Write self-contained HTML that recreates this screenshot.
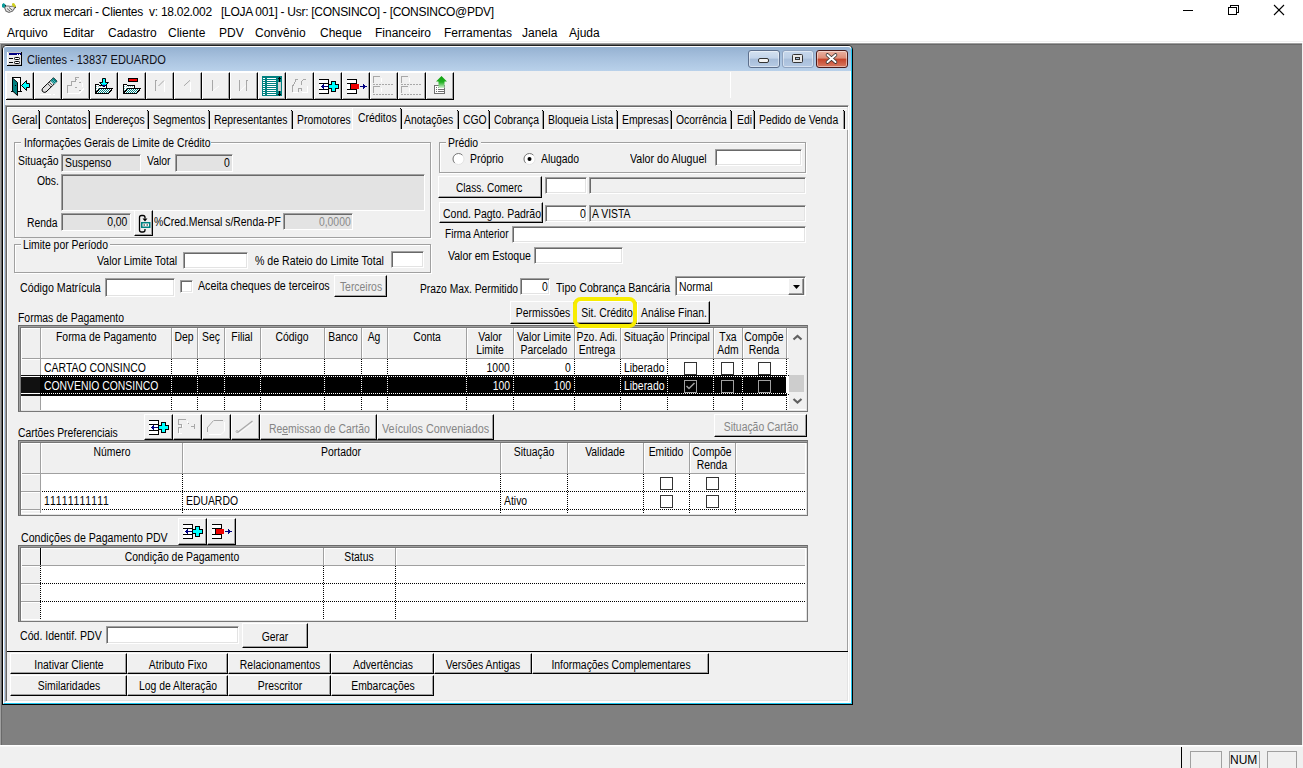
<!DOCTYPE html>
<html><head><meta charset="utf-8"><style>
html,body{margin:0;padding:0;}
body{width:1303px;height:768px;position:relative;overflow:hidden;background:#808080;font-family:"Liberation Sans",sans-serif;}
body>div,body>svg{position:absolute;}
.t{white-space:nowrap;}
</style></head><body>
<div style="left:0px;top:0px;width:1303px;height:41px;background:#fff"></div>
<div style="left:0px;top:41px;width:1303px;height:1px;background:#f0f0f0"></div>
<div style="left:0px;top:42px;width:1303px;height:1px;background:#fff"></div>
<div style="left:0px;top:43px;width:1303px;height:1px;background:#a0a0a0"></div>
<div style="left:0px;top:44px;width:1302px;height:1px;background:#696969"></div>
<div style="left:1302px;top:43px;width:1px;height:702px;background:#f0f0f0"></div>
<div style="left:0px;top:43px;width:1px;height:702px;background:#a0a0a0"></div>
<div style="left:1px;top:44px;width:1px;height:701px;background:#696969"></div>
<div style="left:0px;top:745px;width:1303px;height:1px;background:#fff"></div>
<div style="left:0px;top:746px;width:1303px;height:1px;background:#f8f8f8"></div>
<div style="left:0px;top:747px;width:1303px;height:21px;background:#f0f0f0"></div>
<div style="left:1181px;top:747px;width:1px;height:21px;background:#000"></div>
<div style="left:1190px;top:751px;width:32px;height:18px;border:1px solid #a0a0a0;box-sizing:border-box"></div>
<div style="left:1229px;top:751px;width:31px;height:18px;border:1px solid #a0a0a0;box-sizing:border-box"></div>
<div style="left:1267px;top:751px;width:30px;height:18px;border:1px solid #a0a0a0;box-sizing:border-box"></div>
<div class="t" style="left:1230.00px;top:754px;font-size:12px;line-height:12px;letter-spacing:0.000px;color:#000;">NUM</div>
<div class="t" style="left:23.00px;top:6px;font-size:12px;line-height:12px;letter-spacing:-0.280px;color:#000;white-space:pre;">acrux mercari - Clientes  v: 18.02.002   [LOJA 001] - Usr: [CONSINCO] - [CONSINCO@PDV]</div>
<div class="t" style="left:7.00px;top:27px;font-size:12px;line-height:12px;letter-spacing:0.000px;color:#000;">Arquivo</div>
<div class="t" style="left:63.00px;top:27px;font-size:12px;line-height:12px;letter-spacing:0.000px;color:#000;">Editar</div>
<div class="t" style="left:108.00px;top:27px;font-size:12px;line-height:12px;letter-spacing:0.000px;color:#000;">Cadastro</div>
<div class="t" style="left:168.00px;top:27px;font-size:12px;line-height:12px;letter-spacing:0.000px;color:#000;">Cliente</div>
<div class="t" style="left:219.00px;top:27px;font-size:12px;line-height:12px;letter-spacing:0.000px;color:#000;">PDV</div>
<div class="t" style="left:255.00px;top:27px;font-size:12px;line-height:12px;letter-spacing:0.000px;color:#000;">Convênio</div>
<div class="t" style="left:320.00px;top:27px;font-size:12px;line-height:12px;letter-spacing:0.000px;color:#000;">Cheque</div>
<div class="t" style="left:375.00px;top:27px;font-size:12px;line-height:12px;letter-spacing:0.000px;color:#000;">Financeiro</div>
<div class="t" style="left:444.00px;top:27px;font-size:12px;line-height:12px;letter-spacing:0.000px;color:#000;">Ferramentas</div>
<div class="t" style="left:522.00px;top:27px;font-size:12px;line-height:12px;letter-spacing:0.000px;color:#000;">Janela</div>
<div class="t" style="left:569.00px;top:27px;font-size:12px;line-height:12px;letter-spacing:0.000px;color:#000;">Ajuda</div>
<svg style="left:0;top:0" width="1303" height="44"><g stroke="#000" stroke-width="1" fill="none" shape-rendering="crispEdges"><line x1="1183" y1="10.5" x2="1193" y2="10.5"/><rect x="1228.5" y="7.5" width="8" height="7"/><path d="M1230.5 7.5V5.5H1238.5V12.5H1236.5"/></g><g stroke="#000" stroke-width="1.1" fill="none"><line x1="1274" y1="5" x2="1284" y2="15"/><line x1="1284" y1="5" x2="1274" y2="15"/></g><g><path d="M4.5 7.5L6 6H8.5L10.5 6.5L13 6L15 7.5L12.5 11L9 12.5L6 11Z" fill="#e8e8e8" stroke="#707070" stroke-width="1.1"/><path d="M7 8.5L10 11M9 7.5L12 10" stroke="#555" stroke-width="0.9"/><path d="M2 4.5L3.5 3L5.5 4.5V6L3.5 8L2 7Z" fill="#0a9a9a"/><path d="M5 5.5L6 6" stroke="#000"/><path d="M12 3.5L14 3L16 6L15.5 7.5L13 6.5L12 5Z" fill="#d0d020"/><path d="M15 7L16 7.5" stroke="#222"/></g></svg>
<div style="left:2px;top:45px;width:851px;height:660px;background:#f0f0f0;border:1px solid #1e1e1e;border-left-color:#000;border-right-color:#000;border-bottom-color:#000;box-sizing:border-box;border-radius:5px 5px 0 0"></div>
<div style="left:3px;top:46px;width:849px;height:658px;border-left:1px solid #fff;border-top:1px solid #fff;border-right:1px solid #1fc6ef;border-bottom:1px solid #1fc6ef;box-sizing:border-box;border-radius:4px 4px 0 0"></div>
<div style="left:4px;top:47px;width:847px;height:656px;border-left:1px solid #b8d0ec;border-right:1px solid #fff;border-bottom:1px solid #fff;box-sizing:border-box"></div>
<div style="left:4px;top:47px;width:847px;height:24px;background:linear-gradient(#95b1d1,#a7c1de 45%,#b9d1ea);border-radius:3px 3px 0 0"></div>
<div style="left:5px;top:71px;width:844px;height:630px;background:#f0f0f0"></div>
<div style="left:730px;top:72px;width:1px;height:26px;background:#fff"></div>
<div class="t" style="left:27.00px;top:54px;font-size:12px;line-height:12px;letter-spacing:0.000px;color:#101018;transform:scaleX(0.9205);transform-origin:left top;">Clientes - 13837 EDUARDO</div>
<svg style="left:7px;top:52px" width="16" height="14"><rect x="0" y="0" width="15" height="13" fill="#c8c8c8"/><rect x="1" y="1" width="13" height="11" fill="#ececec"/><rect x="14" y="0" width="1" height="14" fill="#000"/><rect x="0" y="13" width="15" height="1" fill="#000"/><rect x="0" y="0" width="1" height="13" fill="#fff"/><rect x="2" y="1" width="12" height="2" fill="#000080"/><rect x="10" y="2" width="1" height="1" fill="#fff"/><rect x="12" y="2" width="1" height="1" fill="#fff"/><rect x="2" y="6" width="4" height="1" fill="#000"/><rect x="7.5" y="5.5" width="5" height="2" rx="0.8" fill="#fff" stroke="#000"/><rect x="2" y="10" width="4" height="1" fill="#000"/><rect x="7.5" y="9.5" width="5" height="2" rx="0.8" fill="#fff" stroke="#000"/></svg>
<div style="left:748px;top:50px;width:32px;height:18px;border-radius:3px;border:1px solid #5d6f8c;box-sizing:border-box;background:linear-gradient(#d4e1f0 0,#c3d4ea 45%,#a6bcd8 50%,#b7cbe4 100%);box-shadow:inset 0 0 0 1px rgba(255,255,255,0.45)"></div>
<div style="left:782px;top:50px;width:32px;height:18px;border-radius:3px;border:1px solid #8fa3bf;box-sizing:border-box;background:linear-gradient(#c6d7ec 0,#bccfe6 45%,#a9bfdb 50%,#b4c9e3 100%);box-shadow:inset 0 0 0 1px rgba(255,255,255,0.45)"></div>
<div style="left:816px;top:50px;width:32px;height:18px;border-radius:3px;border:1px solid #4a1a1a;box-sizing:border-box;background:linear-gradient(#eab1a1 0,#de8d78 45%,#c5432a 50%,#d77a62 100%);box-shadow:inset 0 0 0 1px rgba(255,255,255,0.45)"></div>
<svg style="left:748px;top:50px" width="100" height="18"><rect x="10.5" y="8.5" width="10" height="4" rx="1.5" fill="#f4f4f4" stroke="#333"/><rect x="44.5" y="4.5" width="10" height="8" rx="1" fill="#e8e8e8" stroke="#333"/><rect x="47.5" y="7.5" width="4" height="2" fill="#a6bcd8" stroke="#333"/><path d="M79.5 5L87.5 12M87.5 5L79.5 12" stroke="#333" stroke-width="3.6" stroke-linecap="round"/><path d="M79.5 5L87.5 12M87.5 5L79.5 12" stroke="#fff" stroke-width="2" stroke-linecap="round"/></svg>
<div style="left:6px;top:72px;width:28px;height:27px;border-top:1px solid #fff;border-left:1px solid #fff;border-right:1px solid #000;box-sizing:border-box;box-shadow:inset -1px -1px 0 #a0a0a0"></div>
<div style="left:34px;top:72px;width:28px;height:27px;border-top:1px solid #fff;border-left:1px solid #fff;border-right:1px solid #000;box-sizing:border-box;box-shadow:inset -1px -1px 0 #a0a0a0"></div>
<div style="left:62px;top:72px;width:28px;height:27px;border-top:1px solid #fff;border-left:1px solid #fff;border-right:1px solid #000;box-sizing:border-box;box-shadow:inset -1px -1px 0 #a0a0a0"></div>
<div style="left:90px;top:72px;width:28px;height:27px;border-top:1px solid #fff;border-left:1px solid #fff;border-right:1px solid #000;box-sizing:border-box;box-shadow:inset -1px -1px 0 #a0a0a0"></div>
<div style="left:118px;top:72px;width:28px;height:27px;border-top:1px solid #fff;border-left:1px solid #fff;border-right:1px solid #000;box-sizing:border-box;box-shadow:inset -1px -1px 0 #a0a0a0"></div>
<div style="left:146px;top:72px;width:28px;height:27px;border-top:1px solid #fff;border-left:1px solid #fff;border-right:1px solid #000;box-sizing:border-box;box-shadow:inset -1px -1px 0 #a0a0a0"></div>
<div style="left:174px;top:72px;width:28px;height:27px;border-top:1px solid #fff;border-left:1px solid #fff;border-right:1px solid #000;box-sizing:border-box;box-shadow:inset -1px -1px 0 #a0a0a0"></div>
<div style="left:202px;top:72px;width:28px;height:27px;border-top:1px solid #fff;border-left:1px solid #fff;border-right:1px solid #000;box-sizing:border-box;box-shadow:inset -1px -1px 0 #a0a0a0"></div>
<div style="left:230px;top:72px;width:28px;height:27px;border-top:1px solid #fff;border-left:1px solid #fff;border-right:1px solid #000;box-sizing:border-box;box-shadow:inset -1px -1px 0 #a0a0a0"></div>
<div style="left:258px;top:72px;width:28px;height:27px;border-top:1px solid #fff;border-left:1px solid #fff;border-right:1px solid #000;box-sizing:border-box;box-shadow:inset -1px -1px 0 #a0a0a0"></div>
<div style="left:286px;top:72px;width:28px;height:27px;border-top:1px solid #fff;border-left:1px solid #fff;border-right:1px solid #000;box-sizing:border-box;box-shadow:inset -1px -1px 0 #a0a0a0"></div>
<div style="left:314px;top:72px;width:28px;height:27px;border-top:1px solid #fff;border-left:1px solid #fff;border-right:1px solid #000;box-sizing:border-box;box-shadow:inset -1px -1px 0 #a0a0a0"></div>
<div style="left:342px;top:72px;width:28px;height:27px;border-top:1px solid #fff;border-left:1px solid #fff;border-right:1px solid #000;box-sizing:border-box;box-shadow:inset -1px -1px 0 #a0a0a0"></div>
<div style="left:370px;top:72px;width:28px;height:27px;border-top:1px solid #fff;border-left:1px solid #fff;border-right:1px solid #000;box-sizing:border-box;box-shadow:inset -1px -1px 0 #a0a0a0"></div>
<div style="left:398px;top:72px;width:28px;height:27px;border-top:1px solid #fff;border-left:1px solid #fff;border-right:1px solid #000;box-sizing:border-box;box-shadow:inset -1px -1px 0 #a0a0a0"></div>
<div style="left:426px;top:72px;width:28px;height:27px;border-top:1px solid #fff;border-left:1px solid #fff;border-right:1px solid #000;box-sizing:border-box;box-shadow:inset -1px -1px 0 #a0a0a0"></div>
<div style="left:5px;top:99px;width:449px;height:1px;background:#000"></div>
<div style="left:5px;top:71px;width:1px;height:29px;background:#fff"></div>
<div style="left:5px;top:71px;width:449px;height:1px;background:#fff"></div>
<svg style="left:6px;top:72px" width="27" height="27"><g shape-rendering="crispEdges"><rect x="6.5" y="5.5" width="8" height="14" fill="#fff" stroke="#000"/><path d="M5 19.5H16" stroke="#000"/></g><path d="M6.5 6L11.5 10.5V23.5L6.5 19Z" fill="#008080" stroke="#000"/><rect x="9" y="13" width="1" height="1" fill="#000"/><path d="M15.5 13.5L20.5 8.5V11.5H23.5V15.5H20.5V18.5Z" fill="#00ffff" stroke="#000"/></svg>
<svg style="left:34px;top:72px" width="27" height="27"><path d="M8.5 16.5L19.5 5.8L23 9.3L12 20 Q10 21 8.5 19.5 Q7.5 18 8.5 16.5Z" fill="#e0e0e0" stroke="#000"/><path d="M16.5 8.7L19.5 5.8L23 9.3L20 12.2Z" fill="#008080"/><path d="M17.5 8.5L21 12M18.5 7.5L22 11" stroke="#7fd0d0" stroke-width="0.7"/><path d="M13.5 11.5L17 15M15 10L18.5 13.5" stroke="#555" stroke-width="1"/><path d="M6 22.5H17M19 22.5H21" stroke="#fff"/></svg>
<svg style="left:62px;top:72px" width="27" height="27"><g shape-rendering="crispEdges"><path d="M5.5 21V13.5H7.5M9.5 12V9.5H11.5M13.5 8V5.5H17" stroke="#a8a8a8" fill="none"/><path d="M7.5 13.5H9.5V12M11.5 9.5H13.5V8" stroke="#a8a8a8" fill="none"/><path d="M14 7.5H15M17 10.5H19M13 15.5H15M17 18.5H21" stroke="#a8a8a8"/><path d="M6 21.5H17L22 16.5M20 11V15M18.5 8V9" stroke="#fff" fill="none"/></g></svg>
<svg style="left:90px;top:72px" width="27" height="27"><defs><pattern id="dith3" width="2" height="2" patternUnits="userSpaceOnUse"><rect width="2" height="2" fill="#fff"/><rect width="1" height="1" fill="#008080"/><rect x="1" y="1" width="1" height="1" fill="#008080"/></pattern><pattern id="dithl3" width="2" height="2" patternUnits="userSpaceOnUse"><rect width="2" height="2" fill="#fff"/><rect width="1" height="1" fill="#80c0c0"/></pattern></defs><g shape-rendering="crispEdges"><path d="M5.5 21.5V12.5H8.5L9.5 13.5H16.5V16.5" fill="url(#dithl3)" stroke="#000"/><path d="M5.5 21.5H18.5L22.5 16.5H9.5Z" fill="url(#dith3)" stroke="#000"/></g><path d="M12.5 6.5H15.5V10.5H18.5L14 15L9.5 10.5H12.5Z" fill="#00ffff" stroke="#000"/><path d="M13 13.5H15" stroke="#0000c0" stroke-width="1.5"/></svg>
<svg style="left:118px;top:72px" width="27" height="27"><defs><pattern id="dith4" width="2" height="2" patternUnits="userSpaceOnUse"><rect width="2" height="2" fill="#fff"/><rect width="1" height="1" fill="#008080"/><rect x="1" y="1" width="1" height="1" fill="#008080"/></pattern><pattern id="dithl4" width="2" height="2" patternUnits="userSpaceOnUse"><rect width="2" height="2" fill="#fff"/><rect width="1" height="1" fill="#80c0c0"/></pattern></defs><g shape-rendering="crispEdges"><path d="M5.5 21.5V12.5H8.5L9.5 13.5H16.5V16.5" fill="url(#dithl4)" stroke="#000"/><path d="M5.5 21.5H18.5L22.5 16.5H9.5Z" fill="url(#dith4)" stroke="#000"/></g><rect x="10.5" y="6.5" width="9" height="3" fill="#f00000" stroke="#000"/></svg>
<svg style="left:146px;top:72px" width="27" height="27"><g shape-rendering="crispEdges"><path d="M9.5 8V19M10 8.5H11" stroke="#a8a8a8"/><path d="M18.5 8V20" stroke="#fff"/></g><path d="M12.5 14L18 8.5" stroke="#a8a8a8"/></svg>
<svg style="left:174px;top:72px" width="27" height="27"><path d="M10 13.8L16 8.3" stroke="#a8a8a8"/><path d="M16.5 10V20" stroke="#fff" shape-rendering="crispEdges"/></svg>
<svg style="left:202px;top:72px" width="27" height="27"><path d="M10.5 8V19" stroke="#a8a8a8" shape-rendering="crispEdges"/><path d="M11 19L17 14" stroke="#fff"/></svg>
<svg style="left:230px;top:72px" width="27" height="27"><g shape-rendering="crispEdges"><path d="M9.5 8V19M16.5 9V19M16 8.5H18" stroke="#a8a8a8"/></g><path d="M10 19L16 13.5" stroke="#fff"/></svg>
<svg style="left:258px;top:72px" width="27" height="27"><g shape-rendering="crispEdges"><rect x="4" y="4" width="20" height="20" fill="#008080"/><path d="M5 6.5H7M9 6.5H18" stroke="#fff"/><path d="M5 8.5H7M9 8.5H18" stroke="#fff"/><path d="M5 10.5H7M9 10.5H18" stroke="#fff"/><path d="M5 12.5H7M9 12.5H18" stroke="#fff"/><path d="M5 14.5H7M9 14.5H18" stroke="#fff"/><path d="M5 16.5H7M9 16.5H18" stroke="#fff"/><path d="M5 18.5H7M9 18.5H18" stroke="#fff"/><path d="M5 20.5H7M9 20.5H18" stroke="#fff"/><path d="M5 22.5H7M9 22.5H18" stroke="#fff"/><rect x="20" y="10" width="3" height="9" fill="#d0d0d0"/><path d="M21.5 5V10M21.5 19V24M20 6.5H23M20 22.5H23" stroke="#000"/></g></svg>
<svg style="left:286px;top:72px" width="27" height="27"><g shape-rendering="crispEdges"><path d="M6.5 20V14.5L9.5 9V7.5H12M15.5 13V9.5L17.5 7.5H20M12.5 20V16.5H15.5V19" stroke="#a8a8a8" fill="none"/><path d="M7 20.5H12M16 20.5H21.5V14" stroke="#fff" fill="none"/></g></svg>
<svg style="left:317px;top:77px" width="24" height="19"><g transform="translate(2,2)" shape-rendering="crispEdges"><rect x="0" y="0" width="9" height="15" fill="#fff"/><path d="M0 0.5H10M0 4.5H10M0 10.5H10M0 14.5H10M9.5 0V15" stroke="#000"/><path d="M3 7.5H9M4.5 5V10M3.5 6V9" stroke="#000080"/><path d="M2 7.5H3" stroke="#000080"/><path d="M12.5 2.5H16.5V5.5H19.5V9.5H16.5V12.5H12.5V9.5H9.5V5.5H12.5Z" fill="#00ffff" stroke="#000"/></g></svg>
<svg style="left:345px;top:77px" width="24" height="19"><g transform="translate(2,2)" shape-rendering="crispEdges"><rect x="0" y="0" width="9" height="15" fill="#fff"/><path d="M0 0.5H10M0 4.5H10M0 10.5H10M0 14.5H10M9.5 0V5M9.5 10V15M3.5 4V11" stroke="#000"/><rect x="4" y="5" width="8" height="5" fill="#f00000"/><path d="M13 7.5H19M16.5 5V10M17.5 6V9" stroke="#000080"/><path d="M18 7.5H20" stroke="#000080"/></g></svg>
<svg style="left:370px;top:72px" width="27" height="27"><g shape-rendering="crispEdges"><path d="M3.5 11V4.5H10M3.5 21V14.5H10" stroke="#a8a8a8" fill="none"/><path d="M11.5 6V10M11.5 16V20" stroke="#fff"/><path d="M3 12.5H24M3 22.5H24" stroke="#a8a8a8" stroke-dasharray="2 1"/></g></svg>
<svg style="left:398px;top:72px" width="27" height="27"><g shape-rendering="crispEdges"><path d="M3.5 11V4.5H10M3.5 21V14.5H10" stroke="#a8a8a8" fill="none"/><path d="M11.5 6V10M11.5 16V20" stroke="#fff"/><path d="M3 12.5H24M3 22.5H24" stroke="#a8a8a8" stroke-dasharray="2 1"/></g></svg>
<svg style="left:426px;top:72px" width="27" height="27"><defs><linearGradient id="ga" x1="0" y1="0" x2="0" y2="1"><stop offset="0" stop-color="#10a010"/><stop offset="0.5" stop-color="#20b020"/><stop offset="1" stop-color="#d0f0d0"/></linearGradient></defs><g shape-rendering="crispEdges"><rect x="8.5" y="13.5" width="10" height="8" fill="#fff" stroke="#707070"/><path d="M10 15.5H11M10 17.5H11M10 19.5H11M12 15.5H18M12 17.5H18M12 19.5H18" stroke="#707070"/></g><path d="M12.5 16V9.5H10L15.5 4L21 9.5H18.5V16Z" fill="url(#ga)"/></svg>
<div style="left:5px;top:105px;width:844px;height:597px;border-top:1px solid #a0a0a0;border-left:1px solid #a0a0a0;border-right:1px solid #fff;border-bottom:1px solid #fff;box-sizing:border-box;box-shadow:inset 1px 1px 0 #696969, inset -1px -1px 0 #e3e3e3"></div>
<div style="left:7px;top:107px;width:840px;height:1px;background:#fff"></div>
<div style="left:7px;top:107px;width:1px;height:544px;background:#fff"></div>
<div style="left:9px;top:109px;width:838px;height:1px;background:#fbfbfb"></div>
<div style="left:9px;top:129px;width:838px;height:1px;background:#fff"></div>
<div style="left:847px;top:130px;width:1px;height:521px;background:#a0a0a0"></div>
<div style="left:7px;top:651px;width:841px;height:1px;background:#000"></div>
<div style="left:352px;top:107px;width:49px;height:23px;background:#f0f0f0;border-top:1px solid #fff;border-left:1px solid #fff;box-sizing:border-box"></div>
<div style="left:38px;top:111px;width:1px;height:18px;background:#a0a0a0"></div>
<div style="left:39px;top:111px;width:1px;height:18px;background:#000"></div>
<div style="left:38px;top:110px;width:1px;height:1px;background:#000"></div>
<div style="left:88px;top:111px;width:1px;height:18px;background:#a0a0a0"></div>
<div style="left:89px;top:111px;width:1px;height:18px;background:#000"></div>
<div style="left:88px;top:110px;width:1px;height:1px;background:#000"></div>
<div style="left:147px;top:111px;width:1px;height:18px;background:#a0a0a0"></div>
<div style="left:148px;top:111px;width:1px;height:18px;background:#000"></div>
<div style="left:147px;top:110px;width:1px;height:1px;background:#000"></div>
<div style="left:208px;top:111px;width:1px;height:18px;background:#a0a0a0"></div>
<div style="left:209px;top:111px;width:1px;height:18px;background:#000"></div>
<div style="left:208px;top:110px;width:1px;height:1px;background:#000"></div>
<div style="left:291px;top:111px;width:1px;height:18px;background:#a0a0a0"></div>
<div style="left:292px;top:111px;width:1px;height:18px;background:#000"></div>
<div style="left:291px;top:110px;width:1px;height:1px;background:#000"></div>
<div style="left:400px;top:109px;width:1px;height:20px;background:#a0a0a0"></div>
<div style="left:401px;top:109px;width:1px;height:20px;background:#000"></div>
<div style="left:400px;top:108px;width:1px;height:1px;background:#000"></div>
<div style="left:457px;top:111px;width:1px;height:18px;background:#a0a0a0"></div>
<div style="left:458px;top:111px;width:1px;height:18px;background:#000"></div>
<div style="left:457px;top:110px;width:1px;height:1px;background:#000"></div>
<div style="left:488px;top:111px;width:1px;height:18px;background:#a0a0a0"></div>
<div style="left:489px;top:111px;width:1px;height:18px;background:#000"></div>
<div style="left:488px;top:110px;width:1px;height:1px;background:#000"></div>
<div style="left:542px;top:111px;width:1px;height:18px;background:#a0a0a0"></div>
<div style="left:543px;top:111px;width:1px;height:18px;background:#000"></div>
<div style="left:542px;top:110px;width:1px;height:1px;background:#000"></div>
<div style="left:616px;top:111px;width:1px;height:18px;background:#a0a0a0"></div>
<div style="left:617px;top:111px;width:1px;height:18px;background:#000"></div>
<div style="left:616px;top:110px;width:1px;height:1px;background:#000"></div>
<div style="left:670px;top:111px;width:1px;height:18px;background:#a0a0a0"></div>
<div style="left:671px;top:111px;width:1px;height:18px;background:#000"></div>
<div style="left:670px;top:110px;width:1px;height:1px;background:#000"></div>
<div style="left:730px;top:111px;width:1px;height:18px;background:#a0a0a0"></div>
<div style="left:731px;top:111px;width:1px;height:18px;background:#000"></div>
<div style="left:730px;top:110px;width:1px;height:1px;background:#000"></div>
<div style="left:753px;top:111px;width:1px;height:18px;background:#a0a0a0"></div>
<div style="left:754px;top:111px;width:1px;height:18px;background:#000"></div>
<div style="left:753px;top:110px;width:1px;height:1px;background:#000"></div>
<div style="left:843px;top:111px;width:1px;height:18px;background:#a0a0a0"></div>
<div style="left:844px;top:111px;width:1px;height:18px;background:#000"></div>
<div style="left:843px;top:110px;width:1px;height:1px;background:#000"></div>
<div class="t" style="left:11.50px;top:114px;font-size:12px;line-height:12px;letter-spacing:0.000px;color:#000;transform:scaleX(0.8660);transform-origin:left top;">Geral</div>
<div class="t" style="left:44.50px;top:114px;font-size:12px;line-height:12px;letter-spacing:0.000px;color:#000;transform:scaleX(0.8660);transform-origin:left top;">Contatos</div>
<div class="t" style="left:94.50px;top:114px;font-size:12px;line-height:12px;letter-spacing:0.000px;color:#000;transform:scaleX(0.8660);transform-origin:left top;">Endereços</div>
<div class="t" style="left:153.00px;top:114px;font-size:12px;line-height:12px;letter-spacing:0.000px;color:#000;transform:scaleX(0.8660);transform-origin:left top;">Segmentos</div>
<div class="t" style="left:214.00px;top:114px;font-size:12px;line-height:12px;letter-spacing:0.000px;color:#000;transform:scaleX(0.8660);transform-origin:left top;">Representantes</div>
<div class="t" style="left:297.00px;top:114px;font-size:12px;line-height:12px;letter-spacing:0.000px;color:#000;transform:scaleX(0.8660);transform-origin:left top;">Promotores</div>
<div class="t" style="left:403.50px;top:114px;font-size:12px;line-height:12px;letter-spacing:0.000px;color:#000;transform:scaleX(0.8660);transform-origin:left top;">Anotações</div>
<div class="t" style="left:463.00px;top:114px;font-size:12px;line-height:12px;letter-spacing:0.000px;color:#000;transform:scaleX(0.8660);transform-origin:left top;">CGO</div>
<div class="t" style="left:494.00px;top:114px;font-size:12px;line-height:12px;letter-spacing:0.000px;color:#000;transform:scaleX(0.8660);transform-origin:left top;">Cobrança</div>
<div class="t" style="left:548.00px;top:114px;font-size:12px;line-height:12px;letter-spacing:0.000px;color:#000;transform:scaleX(0.8660);transform-origin:left top;">Bloqueia Lista</div>
<div class="t" style="left:622.00px;top:114px;font-size:12px;line-height:12px;letter-spacing:0.000px;color:#000;transform:scaleX(0.8660);transform-origin:left top;">Empresas</div>
<div class="t" style="left:676.00px;top:114px;font-size:12px;line-height:12px;letter-spacing:0.000px;color:#000;transform:scaleX(0.8660);transform-origin:left top;">Ocorrência</div>
<div class="t" style="left:736.50px;top:114px;font-size:12px;line-height:12px;letter-spacing:0.000px;color:#000;transform:scaleX(0.8660);transform-origin:left top;">Edi</div>
<div class="t" style="left:759.00px;top:114px;font-size:12px;line-height:12px;letter-spacing:0.000px;color:#000;transform:scaleX(0.8660);transform-origin:left top;">Pedido de Venda</div>
<div class="t" style="left:358.00px;top:112px;font-size:12px;line-height:12px;letter-spacing:0.000px;color:#000;transform:scaleX(0.8660);transform-origin:left top;">Créditos</div>
<div style="left:14px;top:142px;width:417px;height:96px;border:1px solid #a0a0a0;box-sizing:border-box;box-shadow:inset 1px 1px 0 #fff, 1px 1px 0 #fff"></div>
<div style="left:21px;top:136px;width:190px;height:12px;background:#f0f0f0"></div>
<div class="t" style="left:23.50px;top:137px;font-size:12px;line-height:12px;letter-spacing:0.000px;color:#000;transform:scaleX(0.8657);transform-origin:left top;">Informações Gerais de Limite de Crédito</div>
<div class="t" style="left:17.50px;top:155px;font-size:12px;line-height:12px;letter-spacing:0.000px;color:#000;transform:scaleX(0.8660);transform-origin:left top;">Situação</div>
<div style="left:61px;top:154px;width:80px;height:18px;background:#e3e3e3;border-top:1px solid #a0a0a0;border-left:1px solid #a0a0a0;border-bottom:1px solid #fff;border-right:1px solid #fff;box-sizing:border-box;box-shadow:inset 1px 1px 0 #696969, inset -1px -1px 0 #e3e3e3"></div>
<div class="t" style="left:65.00px;top:157px;font-size:12px;line-height:12px;letter-spacing:0.000px;color:#000;transform:scaleX(0.8660);transform-origin:left top;">Suspenso</div>
<div class="t" style="left:147.00px;top:155px;font-size:12px;line-height:12px;letter-spacing:0.000px;color:#000;transform:scaleX(0.8660);transform-origin:left top;">Valor</div>
<div style="left:175px;top:154px;width:58px;height:18px;background:#e3e3e3;border-top:1px solid #a0a0a0;border-left:1px solid #a0a0a0;border-bottom:1px solid #fff;border-right:1px solid #fff;box-sizing:border-box;box-shadow:inset 1px 1px 0 #696969, inset -1px -1px 0 #e3e3e3"></div>
<div class="t" style="right:1073.00px;top:157px;font-size:12px;line-height:12px;letter-spacing:0.000px;color:#000;text-align:right;transform:scaleX(0.8660);transform-origin:right top;">0</div>
<div class="t" style="left:37.00px;top:175px;font-size:12px;line-height:12px;letter-spacing:0.000px;color:#000;transform:scaleX(0.8660);transform-origin:left top;">Obs.</div>
<div style="left:61px;top:174px;width:364px;height:37px;background:#e3e3e3;border-top:1px solid #a0a0a0;border-left:1px solid #a0a0a0;border-bottom:1px solid #fff;border-right:1px solid #fff;box-sizing:border-box;box-shadow:inset 1px 1px 0 #696969, inset -1px -1px 0 #e3e3e3"></div>
<div class="t" style="left:27.00px;top:217px;font-size:12px;line-height:12px;letter-spacing:0.000px;color:#000;transform:scaleX(0.8660);transform-origin:left top;">Renda</div>
<div style="left:61px;top:213px;width:70px;height:18px;background:#e3e3e3;border-top:1px solid #a0a0a0;border-left:1px solid #a0a0a0;border-bottom:1px solid #fff;border-right:1px solid #fff;box-sizing:border-box;box-shadow:inset 1px 1px 0 #696969, inset -1px -1px 0 #e3e3e3"></div>
<div class="t" style="right:1176.00px;top:216px;font-size:12px;line-height:12px;letter-spacing:0.000px;color:#000;text-align:right;transform:scaleX(0.8660);transform-origin:right top;">0,00</div>
<div style="left:134px;top:210px;width:19px;height:26px;background:#f0f0f0;border-top:1px solid #fff;border-left:1px solid #fff;border-bottom:1px solid #000;border-right:1px solid #000;box-sizing:border-box;box-shadow:inset -1px -1px 0 #a0a0a0"></div>
<svg style="left:134px;top:210px" width="19" height="26"><path d="M11 8.5V7.5Q11 5.5 9 5.5H7.5Q5.5 5.5 5.5 7.5V20Q5.5 22 7.5 22H9Q11 22 11 20V19" stroke="#000" stroke-width="1.3" fill="none"/><path d="M8.5 8.5H13.5L11 11.5Z" fill="#000"/><rect x="7.75" y="12.75" width="8" height="4.5" fill="#fff" stroke="#008080" stroke-width="1.5"/><path d="M9.5 15H11M12.5 15H14" stroke="#000"/></svg>
<div class="t" style="left:153.50px;top:216px;font-size:12px;line-height:12px;letter-spacing:0.000px;color:#000;transform:scaleX(0.8678);transform-origin:left top;">%Cred.Mensal s/Renda-PF</div>
<div style="left:283px;top:213px;width:70px;height:17px;background:#e3e3e3;border-top:1px solid #a0a0a0;border-left:1px solid #a0a0a0;border-bottom:1px solid #fff;border-right:1px solid #fff;box-sizing:border-box;box-shadow:inset 1px 1px 0 #696969, inset -1px -1px 0 #e3e3e3"></div>
<div class="t" style="right:952.00px;top:216px;font-size:12px;line-height:12px;letter-spacing:0.000px;color:#8a8a8a;text-align:right;transform:scaleX(0.8660);transform-origin:right top;">0,0000</div>
<div style="left:14px;top:244px;width:417px;height:29px;border:1px solid #a0a0a0;box-sizing:border-box;box-shadow:inset 1px 1px 0 #fff, 1px 1px 0 #fff"></div>
<div style="left:21px;top:238px;width:89px;height:12px;background:#f0f0f0"></div>
<div class="t" style="left:23.00px;top:239px;font-size:12px;line-height:12px;letter-spacing:0.000px;color:#000;transform:scaleX(0.8660);transform-origin:left top;">Limite por Período</div>
<div class="t" style="left:96.50px;top:255px;font-size:12px;line-height:12px;letter-spacing:0.000px;color:#000;transform:scaleX(0.8813);transform-origin:left top;">Valor Limite Total</div>
<div style="left:183px;top:252px;width:65px;height:17px;background:#fff;border-top:1px solid #a0a0a0;border-left:1px solid #a0a0a0;border-bottom:1px solid #fff;border-right:1px solid #fff;box-sizing:border-box;box-shadow:inset 1px 1px 0 #696969, inset -1px -1px 0 #e3e3e3"></div>
<div class="t" style="left:255.30px;top:255px;font-size:12px;line-height:12px;letter-spacing:0.000px;color:#000;transform:scaleX(0.8836);transform-origin:left top;">% de Rateio do Limite Total</div>
<div style="left:391px;top:251px;width:33px;height:17px;background:#fff;border-top:1px solid #a0a0a0;border-left:1px solid #a0a0a0;border-bottom:1px solid #fff;border-right:1px solid #fff;box-sizing:border-box;box-shadow:inset 1px 1px 0 #696969, inset -1px -1px 0 #e3e3e3"></div>
<div class="t" style="left:20.30px;top:282px;font-size:12px;line-height:12px;letter-spacing:0.000px;color:#000;transform:scaleX(0.8901);transform-origin:left top;">Código Matrícula</div>
<div style="left:105px;top:278px;width:70px;height:19px;background:#fff;border-top:1px solid #a0a0a0;border-left:1px solid #a0a0a0;border-bottom:1px solid #fff;border-right:1px solid #fff;box-sizing:border-box;box-shadow:inset 1px 1px 0 #696969, inset -1px -1px 0 #e3e3e3"></div>
<div style="left:180px;top:280px;width:13px;height:13px;background:#fff;border-top:1px solid #a0a0a0;border-left:1px solid #a0a0a0;border-bottom:1px solid #fff;border-right:1px solid #fff;box-sizing:border-box;box-shadow:inset 1px 1px 0 #696969, inset -1px -1px 0 #e3e3e3"></div>
<div class="t" style="left:198.20px;top:280px;font-size:12px;line-height:12px;letter-spacing:0.000px;color:#000;transform:scaleX(0.8892);transform-origin:left top;">Aceita cheques de terceiros</div>
<div style="left:334px;top:275px;width:53px;height:22px;background:#f0f0f0;border-top:1px solid #fff;border-left:1px solid #fff;border-bottom:1px solid #000;border-right:1px solid #000;box-sizing:border-box;box-shadow:inset -1px -1px 0 #a0a0a0"></div>
<div class="t" style="left:160.50px;width:400px;text-align:center;top:281px;font-size:12px;line-height:12px;letter-spacing:0.000px;color:#858585;transform:scaleX(0.8660);transform-origin:center top;">Terceiros</div>
<div style="left:439px;top:142px;width:367px;height:31px;border:1px solid #a0a0a0;box-sizing:border-box;box-shadow:inset 1px 1px 0 #fff, 1px 1px 0 #fff"></div>
<div style="left:446px;top:136px;width:35px;height:12px;background:#f0f0f0"></div>
<div class="t" style="left:448.00px;top:137px;font-size:12px;line-height:12px;letter-spacing:0.000px;color:#000;transform:scaleX(0.8660);transform-origin:left top;">Prédio</div>
<svg style="left:451px;top:152px" width="90" height="14"><circle cx="7.5" cy="7" r="5.5" fill="#fff" stroke="#e3e3e3"/><path d="M3.6 10.9A5.5 5.5 0 0 1 11.4 3.1" stroke="#7a7a7a" fill="none"/><circle cx="78.5" cy="7" r="5.5" fill="#fff" stroke="#e3e3e3"/><path d="M74.6 10.9A5.5 5.5 0 0 1 82.4 3.1" stroke="#7a7a7a" fill="none"/><circle cx="78.5" cy="7" r="2" fill="#000"/></svg>
<div class="t" style="left:470.00px;top:153px;font-size:12px;line-height:12px;letter-spacing:0.000px;color:#000;transform:scaleX(0.8660);transform-origin:left top;">Próprio</div>
<div class="t" style="left:541.00px;top:153px;font-size:12px;line-height:12px;letter-spacing:0.000px;color:#000;transform:scaleX(0.8660);transform-origin:left top;">Alugado</div>
<div class="t" style="left:630.20px;top:153px;font-size:12px;line-height:12px;letter-spacing:0.000px;color:#000;transform:scaleX(0.8862);transform-origin:left top;">Valor do Aluguel</div>
<div style="left:715px;top:149px;width:87px;height:17px;background:#fff;border-top:1px solid #a0a0a0;border-left:1px solid #a0a0a0;border-bottom:1px solid #fff;border-right:1px solid #fff;box-sizing:border-box;box-shadow:inset 1px 1px 0 #696969, inset -1px -1px 0 #e3e3e3"></div>
<div style="left:438px;top:176px;width:104px;height:22px;background:#f0f0f0;border-top:1px solid #fff;border-left:1px solid #fff;border-bottom:1px solid #000;border-right:1px solid #000;box-sizing:border-box;box-shadow:inset -1px -1px 0 #a0a0a0"></div>
<div class="t" style="left:456.40px;top:182px;font-size:12px;line-height:12px;letter-spacing:0.000px;color:#000;transform:scaleX(0.8430);transform-origin:left top;">Class. Comerc</div>
<div style="left:545px;top:177px;width:42px;height:17px;background:#fff;border-top:1px solid #a0a0a0;border-left:1px solid #a0a0a0;border-bottom:1px solid #fff;border-right:1px solid #fff;box-sizing:border-box;box-shadow:inset 1px 1px 0 #696969, inset -1px -1px 0 #e3e3e3"></div>
<div style="left:589px;top:177px;width:217px;height:17px;background:#f0f0f0;border-top:1px solid #a0a0a0;border-left:1px solid #a0a0a0;border-bottom:1px solid #fff;border-right:1px solid #fff;box-sizing:border-box;box-shadow:inset 1px 1px 0 #696969, inset -1px -1px 0 #e3e3e3"></div>
<div style="left:439px;top:202px;width:104px;height:21px;background:#f0f0f0;border-top:1px solid #fff;border-left:1px solid #fff;border-bottom:1px solid #000;border-right:1px solid #000;box-sizing:border-box;box-shadow:inset -1px -1px 0 #a0a0a0"></div>
<div class="t" style="left:442.90px;top:208px;font-size:12px;line-height:12px;letter-spacing:0.000px;color:#000;transform:scaleX(0.8741);transform-origin:left top;">Cond. Pagto. Padrão</div>
<div style="left:545px;top:205px;width:42px;height:17px;background:#fff;border-top:1px solid #a0a0a0;border-left:1px solid #a0a0a0;border-bottom:1px solid #fff;border-right:1px solid #fff;box-sizing:border-box;box-shadow:inset 1px 1px 0 #696969, inset -1px -1px 0 #e3e3e3"></div>
<div class="t" style="right:717.00px;top:208px;font-size:12px;line-height:12px;letter-spacing:0.000px;color:#000;text-align:right;transform:scaleX(0.8660);transform-origin:right top;">0</div>
<div style="left:589px;top:205px;width:217px;height:17px;background:#f0f0f0;border-top:1px solid #a0a0a0;border-left:1px solid #a0a0a0;border-bottom:1px solid #fff;border-right:1px solid #fff;box-sizing:border-box;box-shadow:inset 1px 1px 0 #696969, inset -1px -1px 0 #e3e3e3"></div>
<div class="t" style="left:591.50px;top:208px;font-size:12px;line-height:12px;letter-spacing:0.000px;color:#000;transform:scaleX(0.8660);transform-origin:left top;">A VISTA</div>
<div class="t" style="left:445.40px;top:228px;font-size:12px;line-height:12px;letter-spacing:0.000px;color:#000;transform:scaleX(0.8440);transform-origin:left top;">Firma Anterior</div>
<div style="left:512px;top:226px;width:294px;height:17px;background:#fff;border-top:1px solid #a0a0a0;border-left:1px solid #a0a0a0;border-bottom:1px solid #fff;border-right:1px solid #fff;box-sizing:border-box;box-shadow:inset 1px 1px 0 #696969, inset -1px -1px 0 #e3e3e3"></div>
<div class="t" style="left:447.90px;top:250px;font-size:12px;line-height:12px;letter-spacing:0.000px;color:#000;transform:scaleX(0.8768);transform-origin:left top;">Valor em Estoque</div>
<div style="left:534px;top:247px;width:89px;height:17px;background:#fff;border-top:1px solid #a0a0a0;border-left:1px solid #a0a0a0;border-bottom:1px solid #fff;border-right:1px solid #fff;box-sizing:border-box;box-shadow:inset 1px 1px 0 #696969, inset -1px -1px 0 #e3e3e3"></div>
<div class="t" style="left:419.70px;top:283px;font-size:12px;line-height:12px;letter-spacing:0.000px;color:#000;transform:scaleX(0.8548);transform-origin:left top;">Prazo Max. Permitido</div>
<div style="left:520px;top:278px;width:30px;height:17px;background:#fff;border-top:1px solid #a0a0a0;border-left:1px solid #a0a0a0;border-bottom:1px solid #fff;border-right:1px solid #fff;box-sizing:border-box;box-shadow:inset 1px 1px 0 #696969, inset -1px -1px 0 #e3e3e3"></div>
<div class="t" style="right:755.00px;top:281px;font-size:12px;line-height:12px;letter-spacing:0.000px;color:#000;text-align:right;transform:scaleX(0.8660);transform-origin:right top;">0</div>
<div class="t" style="left:556.20px;top:282px;font-size:12px;line-height:12px;letter-spacing:0.000px;color:#000;transform:scaleX(0.8853);transform-origin:left top;">Tipo Cobrança Bancária</div>
<div style="left:675px;top:276px;width:131px;height:20px;background:#fff;border-top:1px solid #a0a0a0;border-left:1px solid #a0a0a0;border-bottom:1px solid #fff;border-right:1px solid #fff;box-sizing:border-box;box-shadow:inset 1px 1px 0 #696969, inset -1px -1px 0 #e3e3e3"></div>
<div class="t" style="left:678.70px;top:281px;font-size:12px;line-height:12px;letter-spacing:0.000px;color:#000;transform:scaleX(0.8660);transform-origin:left top;">Normal</div>
<div style="left:788px;top:278px;width:16px;height:17px;background:#f0f0f0;border-top:1px solid #fff;border-left:1px solid #fff;border-right:1px solid #696969;border-bottom:1px solid #696969;box-sizing:border-box;box-shadow:inset -1px -1px 0 #a0a0a0"></div>
<svg style="left:788px;top:278px" width="16" height="17"><path d="M5 7H12L8.5 11Z" fill="#000"/></svg>
<div style="left:510px;top:301px;width:65px;height:23px;background:#f0f0f0;border-top:1px solid #fff;border-left:1px solid #fff;border-bottom:1px solid #000;border-right:1px solid #000;box-sizing:border-box;box-shadow:inset -1px -1px 0 #a0a0a0"></div>
<div class="t" style="left:342.50px;width:400px;text-align:center;top:307px;font-size:12px;line-height:12px;letter-spacing:0.000px;color:#000;transform:scaleX(0.8660);transform-origin:center top;">Permissões</div>
<div style="left:575px;top:301px;width:63px;height:23px;background:#f0f0f0;border-top:1px solid #fff;border-left:1px solid #fff;border-bottom:1px solid #000;border-right:1px solid #000;box-sizing:border-box;box-shadow:inset -1px -1px 0 #a0a0a0"></div>
<div class="t" style="left:406.50px;width:400px;text-align:center;top:307px;font-size:12px;line-height:12px;letter-spacing:0.000px;color:#000;transform:scaleX(0.8660);transform-origin:center top;">Sit. Crédito</div>
<div style="left:637px;top:301px;width:73px;height:23px;background:#f0f0f0;border-top:1px solid #fff;border-left:1px solid #fff;border-bottom:1px solid #000;border-right:1px solid #000;box-sizing:border-box;box-shadow:inset -1px -1px 0 #a0a0a0"></div>
<div class="t" style="left:473.50px;width:400px;text-align:center;top:307px;font-size:12px;line-height:12px;letter-spacing:0.000px;color:#000;transform:scaleX(0.8660);transform-origin:center top;">Análise Finan.</div>
<div class="t" style="left:18.40px;top:312px;font-size:12px;line-height:12px;letter-spacing:0.000px;color:#000;transform:scaleX(0.8689);transform-origin:left top;">Formas de Pagamento</div>
<div style="left:18px;top:325px;width:790px;height:87px;background:#fff;border-top:1px solid #6a6a6a;border-left:1px solid #6a6a6a;border-right:1px solid #787878;border-bottom:1px solid #787878;box-sizing:border-box;box-shadow:inset 1px 1px 0 #a0a0a0, inset 2px 2px 0 #767676, inset -1px -1px 0 #e3e3e3"></div>
<div style="left:21px;top:328px;width:768px;height:30px;background:#f0f0f0"></div>
<div style="left:21px;top:328px;width:768px;height:1px;background:#fff"></div>
<div style="left:21px;top:358px;width:768px;height:1px;background:#a0a0a0"></div>
<div style="left:21px;top:359px;width:19px;height:51px;background:#f0f0f0"></div>
<div style="left:21px;top:328px;width:1px;height:82px;background:#fff"></div>
<div style="left:40px;top:328px;width:1px;height:30px;background:#a0a0a0"></div>
<div style="left:41px;top:329px;width:1px;height:29px;background:#fff"></div>
<div style="left:171px;top:328px;width:1px;height:30px;background:#a0a0a0"></div>
<div style="left:172px;top:329px;width:1px;height:29px;background:#fff"></div>
<div style="left:197px;top:328px;width:1px;height:30px;background:#a0a0a0"></div>
<div style="left:198px;top:329px;width:1px;height:29px;background:#fff"></div>
<div style="left:224px;top:328px;width:1px;height:30px;background:#a0a0a0"></div>
<div style="left:225px;top:329px;width:1px;height:29px;background:#fff"></div>
<div style="left:260px;top:328px;width:1px;height:30px;background:#a0a0a0"></div>
<div style="left:261px;top:329px;width:1px;height:29px;background:#fff"></div>
<div style="left:324px;top:328px;width:1px;height:30px;background:#a0a0a0"></div>
<div style="left:325px;top:329px;width:1px;height:29px;background:#fff"></div>
<div style="left:361px;top:328px;width:1px;height:30px;background:#a0a0a0"></div>
<div style="left:362px;top:329px;width:1px;height:29px;background:#fff"></div>
<div style="left:387px;top:328px;width:1px;height:30px;background:#a0a0a0"></div>
<div style="left:388px;top:329px;width:1px;height:29px;background:#fff"></div>
<div style="left:466px;top:328px;width:1px;height:30px;background:#a0a0a0"></div>
<div style="left:467px;top:329px;width:1px;height:29px;background:#fff"></div>
<div style="left:513px;top:328px;width:1px;height:30px;background:#a0a0a0"></div>
<div style="left:514px;top:329px;width:1px;height:29px;background:#fff"></div>
<div style="left:574px;top:328px;width:1px;height:30px;background:#a0a0a0"></div>
<div style="left:575px;top:329px;width:1px;height:29px;background:#fff"></div>
<div style="left:620px;top:328px;width:1px;height:30px;background:#a0a0a0"></div>
<div style="left:621px;top:329px;width:1px;height:29px;background:#fff"></div>
<div style="left:667px;top:328px;width:1px;height:30px;background:#a0a0a0"></div>
<div style="left:668px;top:329px;width:1px;height:29px;background:#fff"></div>
<div style="left:713px;top:328px;width:1px;height:30px;background:#a0a0a0"></div>
<div style="left:714px;top:329px;width:1px;height:29px;background:#fff"></div>
<div style="left:742px;top:328px;width:1px;height:30px;background:#a0a0a0"></div>
<div style="left:743px;top:329px;width:1px;height:29px;background:#fff"></div>
<div style="left:786px;top:328px;width:1px;height:30px;background:#a0a0a0"></div>
<div style="left:787px;top:329px;width:1px;height:29px;background:#fff"></div>
<div style="left:21px;top:359px;width:19px;height:1px;background:#fff"></div>
<div style="left:21px;top:375px;width:19px;height:1px;background:#a0a0a0"></div>
<div style="left:21px;top:376px;width:19px;height:1px;background:#fff"></div>
<div style="left:40px;top:375px;width:749px;height:1px;background:repeating-linear-gradient(90deg,#000 0 1px,transparent 1px 2px)"></div>
<div style="left:21px;top:394px;width:19px;height:1px;background:#a0a0a0"></div>
<div style="left:21px;top:395px;width:19px;height:1px;background:#fff"></div>
<div style="left:40px;top:394px;width:749px;height:1px;background:repeating-linear-gradient(90deg,#000 0 1px,transparent 1px 2px)"></div>
<div style="left:40px;top:359px;width:1px;height:51px;background:#a0a0a0"></div>
<div style="left:171px;top:359px;width:1px;height:51px;background:repeating-linear-gradient(180deg,#000 0 1px,transparent 1px 2px)"></div>
<div style="left:197px;top:359px;width:1px;height:51px;background:repeating-linear-gradient(180deg,#000 0 1px,transparent 1px 2px)"></div>
<div style="left:224px;top:359px;width:1px;height:51px;background:repeating-linear-gradient(180deg,#000 0 1px,transparent 1px 2px)"></div>
<div style="left:260px;top:359px;width:1px;height:51px;background:repeating-linear-gradient(180deg,#000 0 1px,transparent 1px 2px)"></div>
<div style="left:324px;top:359px;width:1px;height:51px;background:repeating-linear-gradient(180deg,#000 0 1px,transparent 1px 2px)"></div>
<div style="left:361px;top:359px;width:1px;height:51px;background:repeating-linear-gradient(180deg,#000 0 1px,transparent 1px 2px)"></div>
<div style="left:387px;top:359px;width:1px;height:51px;background:repeating-linear-gradient(180deg,#000 0 1px,transparent 1px 2px)"></div>
<div style="left:466px;top:359px;width:1px;height:51px;background:repeating-linear-gradient(180deg,#000 0 1px,transparent 1px 2px)"></div>
<div style="left:513px;top:359px;width:1px;height:51px;background:repeating-linear-gradient(180deg,#000 0 1px,transparent 1px 2px)"></div>
<div style="left:574px;top:359px;width:1px;height:51px;background:repeating-linear-gradient(180deg,#000 0 1px,transparent 1px 2px)"></div>
<div style="left:620px;top:359px;width:1px;height:51px;background:repeating-linear-gradient(180deg,#000 0 1px,transparent 1px 2px)"></div>
<div style="left:667px;top:359px;width:1px;height:51px;background:repeating-linear-gradient(180deg,#000 0 1px,transparent 1px 2px)"></div>
<div style="left:713px;top:359px;width:1px;height:51px;background:repeating-linear-gradient(180deg,#000 0 1px,transparent 1px 2px)"></div>
<div style="left:742px;top:359px;width:1px;height:51px;background:repeating-linear-gradient(180deg,#000 0 1px,transparent 1px 2px)"></div>
<div style="left:786px;top:359px;width:1px;height:51px;background:repeating-linear-gradient(180deg,#000 0 1px,transparent 1px 2px)"></div>
<div style="left:21px;top:375px;width:765px;height:21px;background:#000"></div>
<div style="left:21px;top:375px;width:19px;height:21px;background:#111"></div>
<div style="left:21px;top:376px;width:19px;height:1px;background:#fff"></div>
<div style="left:21px;top:393px;width:19px;height:1px;background:#fff"></div>
<div style="left:41px;top:376px;width:745px;height:1px;background:repeating-linear-gradient(90deg,#fff 0 1px,transparent 1px 2px)"></div>
<div style="left:41px;top:393px;width:745px;height:1px;background:repeating-linear-gradient(90deg,#fff 0 1px,transparent 1px 2px)"></div>
<div style="left:171px;top:377px;width:1px;height:16px;background:repeating-linear-gradient(180deg,#fff 0 1px,transparent 1px 2px)"></div>
<div style="left:197px;top:377px;width:1px;height:16px;background:repeating-linear-gradient(180deg,#fff 0 1px,transparent 1px 2px)"></div>
<div style="left:224px;top:377px;width:1px;height:16px;background:repeating-linear-gradient(180deg,#fff 0 1px,transparent 1px 2px)"></div>
<div style="left:260px;top:377px;width:1px;height:16px;background:repeating-linear-gradient(180deg,#fff 0 1px,transparent 1px 2px)"></div>
<div style="left:324px;top:377px;width:1px;height:16px;background:repeating-linear-gradient(180deg,#fff 0 1px,transparent 1px 2px)"></div>
<div style="left:361px;top:377px;width:1px;height:16px;background:repeating-linear-gradient(180deg,#fff 0 1px,transparent 1px 2px)"></div>
<div style="left:387px;top:377px;width:1px;height:16px;background:repeating-linear-gradient(180deg,#fff 0 1px,transparent 1px 2px)"></div>
<div style="left:466px;top:377px;width:1px;height:16px;background:repeating-linear-gradient(180deg,#fff 0 1px,transparent 1px 2px)"></div>
<div style="left:513px;top:377px;width:1px;height:16px;background:repeating-linear-gradient(180deg,#fff 0 1px,transparent 1px 2px)"></div>
<div style="left:574px;top:377px;width:1px;height:16px;background:repeating-linear-gradient(180deg,#fff 0 1px,transparent 1px 2px)"></div>
<div style="left:620px;top:377px;width:1px;height:16px;background:repeating-linear-gradient(180deg,#fff 0 1px,transparent 1px 2px)"></div>
<div style="left:667px;top:377px;width:1px;height:16px;background:repeating-linear-gradient(180deg,#fff 0 1px,transparent 1px 2px)"></div>
<div style="left:713px;top:377px;width:1px;height:16px;background:repeating-linear-gradient(180deg,#fff 0 1px,transparent 1px 2px)"></div>
<div style="left:742px;top:377px;width:1px;height:16px;background:repeating-linear-gradient(180deg,#fff 0 1px,transparent 1px 2px)"></div>
<div style="left:786px;top:377px;width:1px;height:16px;background:repeating-linear-gradient(180deg,#fff 0 1px,transparent 1px 2px)"></div>
<div class="t" style="left:56.40px;top:331px;font-size:12px;line-height:12px;letter-spacing:0.000px;color:#000;transform:scaleX(0.8664);transform-origin:left top;">Forma de Pagamento</div>
<div class="t" style="left:-16.00px;width:400px;text-align:center;top:331px;font-size:12px;line-height:12px;letter-spacing:0.000px;color:#000;transform:scaleX(0.8660);transform-origin:center top;">Dep</div>
<div class="t" style="left:10.50px;width:400px;text-align:center;top:331px;font-size:12px;line-height:12px;letter-spacing:0.000px;color:#000;transform:scaleX(0.8660);transform-origin:center top;">Seç</div>
<div class="t" style="left:42.00px;width:400px;text-align:center;top:331px;font-size:12px;line-height:12px;letter-spacing:0.000px;color:#000;transform:scaleX(0.8660);transform-origin:center top;">Filial</div>
<div class="t" style="left:92.00px;width:400px;text-align:center;top:331px;font-size:12px;line-height:12px;letter-spacing:0.000px;color:#000;transform:scaleX(0.8660);transform-origin:center top;">Código</div>
<div class="t" style="left:142.50px;width:400px;text-align:center;top:331px;font-size:12px;line-height:12px;letter-spacing:0.000px;color:#000;transform:scaleX(0.8660);transform-origin:center top;">Banco</div>
<div class="t" style="left:174.00px;width:400px;text-align:center;top:331px;font-size:12px;line-height:12px;letter-spacing:0.000px;color:#000;transform:scaleX(0.8660);transform-origin:center top;">Ag</div>
<div class="t" style="left:226.50px;width:400px;text-align:center;top:331px;font-size:12px;line-height:12px;letter-spacing:0.000px;color:#000;transform:scaleX(0.8660);transform-origin:center top;">Conta</div>
<div class="t" style="left:289.50px;width:400px;text-align:center;top:331px;font-size:12px;line-height:12px;letter-spacing:0.000px;color:#000;transform:scaleX(0.8660);transform-origin:center top;">Valor</div>
<div class="t" style="left:289.50px;width:400px;text-align:center;top:344px;font-size:12px;line-height:12px;letter-spacing:0.000px;color:#000;transform:scaleX(0.8660);transform-origin:center top;">Limite</div>
<div class="t" style="left:343.50px;width:400px;text-align:center;top:331px;font-size:12px;line-height:12px;letter-spacing:0.000px;color:#000;transform:scaleX(0.8660);transform-origin:center top;">Valor Limite</div>
<div class="t" style="left:343.50px;width:400px;text-align:center;top:344px;font-size:12px;line-height:12px;letter-spacing:0.000px;color:#000;transform:scaleX(0.8660);transform-origin:center top;">Parcelado</div>
<div class="t" style="left:397.00px;width:400px;text-align:center;top:331px;font-size:12px;line-height:12px;letter-spacing:0.000px;color:#000;transform:scaleX(0.8660);transform-origin:center top;">Pzo. Adi.</div>
<div class="t" style="left:397.00px;width:400px;text-align:center;top:344px;font-size:12px;line-height:12px;letter-spacing:0.000px;color:#000;transform:scaleX(0.8660);transform-origin:center top;">Entrega</div>
<div class="t" style="left:443.50px;width:400px;text-align:center;top:331px;font-size:12px;line-height:12px;letter-spacing:0.000px;color:#000;transform:scaleX(0.8660);transform-origin:center top;">Situação</div>
<div class="t" style="left:490.00px;width:400px;text-align:center;top:331px;font-size:12px;line-height:12px;letter-spacing:0.000px;color:#000;transform:scaleX(0.8660);transform-origin:center top;">Principal</div>
<div class="t" style="left:527.50px;width:400px;text-align:center;top:331px;font-size:12px;line-height:12px;letter-spacing:0.000px;color:#000;transform:scaleX(0.8660);transform-origin:center top;">Txa</div>
<div class="t" style="left:527.50px;width:400px;text-align:center;top:344px;font-size:12px;line-height:12px;letter-spacing:0.000px;color:#000;transform:scaleX(0.8660);transform-origin:center top;">Adm</div>
<div class="t" style="left:564.00px;width:400px;text-align:center;top:331px;font-size:12px;line-height:12px;letter-spacing:0.000px;color:#000;transform:scaleX(0.8660);transform-origin:center top;">Compõe</div>
<div class="t" style="left:564.00px;width:400px;text-align:center;top:344px;font-size:12px;line-height:12px;letter-spacing:0.000px;color:#000;transform:scaleX(0.8660);transform-origin:center top;">Renda</div>
<div class="t" style="left:44.20px;top:362px;font-size:12px;line-height:12px;letter-spacing:0.000px;color:#000;transform:scaleX(0.8718);transform-origin:left top;">CARTAO CONSINCO</div>
<div class="t" style="right:793.00px;top:362px;font-size:12px;line-height:12px;letter-spacing:0.000px;color:#000;text-align:right;transform:scaleX(0.8660);transform-origin:right top;">1000</div>
<div class="t" style="right:732.00px;top:362px;font-size:12px;line-height:12px;letter-spacing:0.000px;color:#000;text-align:right;transform:scaleX(0.8660);transform-origin:right top;">0</div>
<div class="t" style="left:624.00px;top:362px;font-size:12px;line-height:12px;letter-spacing:0.000px;color:#000;transform:scaleX(0.8660);transform-origin:left top;">Liberado</div>
<div class="t" style="left:44.20px;top:380px;font-size:12px;line-height:12px;letter-spacing:0.000px;color:#fff;transform:scaleX(0.8652);transform-origin:left top;">CONVENIO CONSINCO</div>
<div class="t" style="right:793.00px;top:380px;font-size:12px;line-height:12px;letter-spacing:0.000px;color:#fff;text-align:right;transform:scaleX(0.8660);transform-origin:right top;">100</div>
<div class="t" style="right:732.00px;top:380px;font-size:12px;line-height:12px;letter-spacing:0.000px;color:#fff;text-align:right;transform:scaleX(0.8660);transform-origin:right top;">100</div>
<div class="t" style="left:624.00px;top:380px;font-size:12px;line-height:12px;letter-spacing:0.000px;color:#fff;transform:scaleX(0.8660);transform-origin:left top;">Liberado</div>
<div style="left:684px;top:362px;width:13px;height:13px;background:#fff;border:1px solid #333;box-sizing:border-box"></div>
<div style="left:684px;top:380px;width:13px;height:13px;background:#000;border:1px solid #a0a0a0;box-sizing:border-box"></div>
<div style="left:721px;top:362px;width:13px;height:13px;background:#fff;border:1px solid #333;box-sizing:border-box"></div>
<div style="left:721px;top:380px;width:13px;height:13px;background:#000;border:1px solid #a0a0a0;box-sizing:border-box"></div>
<div style="left:758px;top:362px;width:13px;height:13px;background:#fff;border:1px solid #333;box-sizing:border-box"></div>
<div style="left:758px;top:380px;width:13px;height:13px;background:#000;border:1px solid #a0a0a0;box-sizing:border-box"></div>
<svg style="left:684px;top:380px" width="13" height="13"><path d="M2.5 6L5 8.5L10.5 3" stroke="#a0a0a0" stroke-width="1.5" fill="none"/></svg>
<div style="left:789px;top:328px;width:17px;height:81px;background:#f0f0f0"></div>
<div style="left:789px;top:375px;width:15px;height:17px;background:#cdcdcd"></div>
<svg style="left:789px;top:328px" width="17" height="81"><path d="M4.5 11.5L8.5 8L12.5 11.5" stroke="#606060" stroke-width="2.2" fill="none"/><path d="M4.5 71L8.5 74.5L12.5 71" stroke="#606060" stroke-width="2.2" fill="none"/></svg>
<div style="left:144px;top:414px;width:29px;height:26px;border-top:1px solid #fff;border-left:1px solid #fff;border-right:1px solid #000;border-bottom:1px solid #000;box-sizing:border-box;background:#f0f0f0;box-shadow:inset -1px -1px 0 #a0a0a0"></div>
<div style="left:173px;top:414px;width:29px;height:26px;border-top:1px solid #fff;border-left:1px solid #fff;border-right:1px solid #000;border-bottom:1px solid #000;box-sizing:border-box;background:#f0f0f0;box-shadow:inset -1px -1px 0 #a0a0a0"></div>
<div style="left:202px;top:414px;width:29px;height:26px;border-top:1px solid #fff;border-left:1px solid #fff;border-right:1px solid #000;border-bottom:1px solid #000;box-sizing:border-box;background:#f0f0f0;box-shadow:inset -1px -1px 0 #a0a0a0"></div>
<div style="left:231px;top:414px;width:29px;height:26px;border-top:1px solid #fff;border-left:1px solid #fff;border-right:1px solid #000;border-bottom:1px solid #000;box-sizing:border-box;background:#f0f0f0;box-shadow:inset -1px -1px 0 #a0a0a0"></div>
<svg style="left:147px;top:418px" width="24" height="19"><g transform="translate(2,2)" shape-rendering="crispEdges"><rect x="0" y="0" width="9" height="15" fill="#fff"/><path d="M0 0.5H10M0 4.5H10M0 10.5H10M0 14.5H10M9.5 0V15" stroke="#000"/><path d="M3 7.5H9M4.5 5V10M3.5 6V9" stroke="#000080"/><path d="M2 7.5H3" stroke="#000080"/><path d="M12.5 2.5H16.5V5.5H19.5V9.5H16.5V12.5H12.5V9.5H9.5V5.5H12.5Z" fill="#00ffff" stroke="#000"/></g></svg>
<svg style="left:173px;top:414px" width="87" height="26"><g shape-rendering="crispEdges"><path d="M13 5.5H5.5V10.5H8.5V13.5H5.5V19" stroke="#a8a8a8" fill="none"/><path d="M14 7V9M9.5 11V13M6.5 15V19.5H9" stroke="#fff" fill="none"/><path d="M15 9.5H16M18 12.5H21M21.5 10V15" stroke="#a8a8a8" fill="none"/><path d="M49.5 6.5H40.5" stroke="#a8a8a8"/><path d="M34.5 13V18" stroke="#a8a8a8"/><path d="M51.5 8V17M48 20.5H35.5" stroke="#fff"/></g><path d="M40.5 6.5L34.5 13.5" stroke="#a8a8a8"/><path d="M51.5 17L48 20.5" stroke="#fff"/><path d="M64.5 18.5L79.5 7" stroke="#a8a8a8" stroke-width="1.3"/><path d="M66 19.5L80 9" stroke="#fff" stroke-width="0.8"/><circle cx="64" cy="17.5" r="1" fill="none" stroke="#a8a8a8" stroke-width="0.8"/></svg>
<div style="left:260px;top:414px;width:117px;height:26px;background:#f0f0f0;border-top:1px solid #fff;border-left:1px solid #fff;border-bottom:1px solid #000;border-right:1px solid #000;box-sizing:border-box;box-shadow:inset -1px -1px 0 #a0a0a0"></div>
<div class="t" style="left:268.70px;top:423px;font-size:12px;line-height:12px;letter-spacing:0.000px;color:#858585;transform:scaleX(0.8681);transform-origin:left top;">Reemissao de Cartão</div>
<div style="left:282px;top:434px;width:6px;height:1px;background:#858585"></div>
<div style="left:377px;top:414px;width:117px;height:26px;background:#f0f0f0;border-top:1px solid #fff;border-left:1px solid #fff;border-bottom:1px solid #000;border-right:1px solid #000;box-sizing:border-box;box-shadow:inset -1px -1px 0 #a0a0a0"></div>
<div class="t" style="left:381.80px;top:423px;font-size:12px;line-height:12px;letter-spacing:0.000px;color:#858585;transform:scaleX(0.9017);transform-origin:left top;">Veículos Conveniados</div>
<div style="left:714px;top:414px;width:93px;height:23px;background:#f0f0f0;border-top:1px solid #fff;border-left:1px solid #fff;border-bottom:1px solid #000;border-right:1px solid #000;box-sizing:border-box;box-shadow:inset -1px -1px 0 #a0a0a0"></div>
<div class="t" style="left:560.50px;width:400px;text-align:center;top:421px;font-size:12px;line-height:12px;letter-spacing:0.000px;color:#858585;transform:scaleX(0.8660);transform-origin:center top;">Situação Cartão</div>
<div class="t" style="left:18.40px;top:427px;font-size:12px;line-height:12px;letter-spacing:0.000px;color:#000;transform:scaleX(0.8643);transform-origin:left top;">Cartões Preferenciais</div>
<div style="left:18px;top:440px;width:790px;height:76px;background:#fff;border-top:1px solid #6a6a6a;border-left:1px solid #6a6a6a;border-right:1px solid #787878;border-bottom:1px solid #787878;box-sizing:border-box;box-shadow:inset 1px 1px 0 #a0a0a0, inset 2px 2px 0 #767676, inset -1px -1px 0 #e3e3e3"></div>
<div style="left:21px;top:443px;width:784px;height:30px;background:#f0f0f0"></div>
<div style="left:21px;top:443px;width:784px;height:1px;background:#fff"></div>
<div style="left:21px;top:473px;width:784px;height:1px;background:#a0a0a0"></div>
<div style="left:21px;top:474px;width:19px;height:39px;background:#f0f0f0"></div>
<div style="left:21px;top:443px;width:1px;height:70px;background:#fff"></div>
<div style="left:40px;top:443px;width:1px;height:30px;background:#a0a0a0"></div>
<div style="left:41px;top:444px;width:1px;height:29px;background:#fff"></div>
<div style="left:182px;top:443px;width:1px;height:30px;background:#a0a0a0"></div>
<div style="left:183px;top:444px;width:1px;height:29px;background:#fff"></div>
<div style="left:500px;top:443px;width:1px;height:30px;background:#a0a0a0"></div>
<div style="left:501px;top:444px;width:1px;height:29px;background:#fff"></div>
<div style="left:567px;top:443px;width:1px;height:30px;background:#a0a0a0"></div>
<div style="left:568px;top:444px;width:1px;height:29px;background:#fff"></div>
<div style="left:643px;top:443px;width:1px;height:30px;background:#a0a0a0"></div>
<div style="left:644px;top:444px;width:1px;height:29px;background:#fff"></div>
<div style="left:689px;top:443px;width:1px;height:30px;background:#a0a0a0"></div>
<div style="left:690px;top:444px;width:1px;height:29px;background:#fff"></div>
<div style="left:735px;top:443px;width:1px;height:30px;background:#a0a0a0"></div>
<div style="left:736px;top:444px;width:1px;height:29px;background:#fff"></div>
<div style="left:21px;top:474px;width:19px;height:1px;background:#fff"></div>
<div style="left:21px;top:491px;width:19px;height:1px;background:#a0a0a0"></div>
<div style="left:21px;top:492px;width:19px;height:1px;background:#fff"></div>
<div style="left:40px;top:491px;width:765px;height:1px;background:repeating-linear-gradient(90deg,#000 0 1px,transparent 1px 2px)"></div>
<div style="left:21px;top:509px;width:19px;height:1px;background:#a0a0a0"></div>
<div style="left:21px;top:510px;width:19px;height:1px;background:#fff"></div>
<div style="left:40px;top:509px;width:765px;height:1px;background:repeating-linear-gradient(90deg,#000 0 1px,transparent 1px 2px)"></div>
<div style="left:40px;top:474px;width:1px;height:39px;background:#a0a0a0"></div>
<div style="left:182px;top:474px;width:1px;height:39px;background:repeating-linear-gradient(180deg,#000 0 1px,transparent 1px 2px)"></div>
<div style="left:500px;top:474px;width:1px;height:39px;background:repeating-linear-gradient(180deg,#000 0 1px,transparent 1px 2px)"></div>
<div style="left:567px;top:474px;width:1px;height:39px;background:repeating-linear-gradient(180deg,#000 0 1px,transparent 1px 2px)"></div>
<div style="left:643px;top:474px;width:1px;height:39px;background:repeating-linear-gradient(180deg,#000 0 1px,transparent 1px 2px)"></div>
<div style="left:689px;top:474px;width:1px;height:39px;background:repeating-linear-gradient(180deg,#000 0 1px,transparent 1px 2px)"></div>
<div style="left:735px;top:474px;width:1px;height:39px;background:repeating-linear-gradient(180deg,#000 0 1px,transparent 1px 2px)"></div>
<div class="t" style="left:-88.50px;width:400px;text-align:center;top:446px;font-size:12px;line-height:12px;letter-spacing:0.000px;color:#000;transform:scaleX(0.8660);transform-origin:center top;">Número</div>
<div class="t" style="left:141.00px;width:400px;text-align:center;top:446px;font-size:12px;line-height:12px;letter-spacing:0.000px;color:#000;transform:scaleX(0.8660);transform-origin:center top;">Portador</div>
<div class="t" style="left:333.50px;width:400px;text-align:center;top:446px;font-size:12px;line-height:12px;letter-spacing:0.000px;color:#000;transform:scaleX(0.8660);transform-origin:center top;">Situação</div>
<div class="t" style="left:405.00px;width:400px;text-align:center;top:446px;font-size:12px;line-height:12px;letter-spacing:0.000px;color:#000;transform:scaleX(0.8660);transform-origin:center top;">Validade</div>
<div class="t" style="left:466.00px;width:400px;text-align:center;top:446px;font-size:12px;line-height:12px;letter-spacing:0.000px;color:#000;transform:scaleX(0.8660);transform-origin:center top;">Emitido</div>
<div class="t" style="left:512.00px;width:400px;text-align:center;top:446px;font-size:12px;line-height:12px;letter-spacing:0.000px;color:#000;transform:scaleX(0.8660);transform-origin:center top;">Compõe</div>
<div class="t" style="left:512.00px;width:400px;text-align:center;top:459px;font-size:12px;line-height:12px;letter-spacing:0.000px;color:#000;transform:scaleX(0.8660);transform-origin:center top;">Renda</div>
<div class="t" style="left:44.00px;top:495px;font-size:12px;line-height:12px;letter-spacing:1.039px;color:#000;transform:scaleX(0.8660);transform-origin:left top;">11111111111</div>
<div class="t" style="left:186.00px;top:495px;font-size:12px;line-height:12px;letter-spacing:0.000px;color:#000;transform:scaleX(0.8660);transform-origin:left top;">EDUARDO</div>
<div class="t" style="left:504.00px;top:495px;font-size:12px;line-height:12px;letter-spacing:0.000px;color:#000;transform:scaleX(0.8660);transform-origin:left top;">Ativo</div>
<div style="left:660px;top:477px;width:13px;height:13px;background:#fff;border:1px solid #333;box-sizing:border-box"></div>
<div style="left:660px;top:495px;width:13px;height:13px;background:#fff;border:1px solid #333;box-sizing:border-box"></div>
<div style="left:706px;top:477px;width:13px;height:13px;background:#fff;border:1px solid #333;box-sizing:border-box"></div>
<div style="left:706px;top:495px;width:13px;height:13px;background:#fff;border:1px solid #333;box-sizing:border-box"></div>
<div class="t" style="left:21.40px;top:532px;font-size:12px;line-height:12px;letter-spacing:0.000px;color:#000;transform:scaleX(0.8831);transform-origin:left top;">Condições de Pagamento PDV</div>
<div style="left:178px;top:518px;width:29px;height:27px;border-top:1px solid #fff;border-left:1px solid #fff;border-right:1px solid #000;border-bottom:1px solid #000;box-sizing:border-box;background:#f0f0f0;box-shadow:inset -1px -1px 0 #a0a0a0"></div>
<div style="left:207px;top:518px;width:29px;height:27px;border-top:1px solid #fff;border-left:1px solid #fff;border-right:1px solid #000;border-bottom:1px solid #000;box-sizing:border-box;background:#f0f0f0;box-shadow:inset -1px -1px 0 #a0a0a0"></div>
<svg style="left:181px;top:522px" width="24" height="19"><g transform="translate(2,2)" shape-rendering="crispEdges"><rect x="0" y="0" width="9" height="15" fill="#fff"/><path d="M0 0.5H10M0 4.5H10M0 10.5H10M0 14.5H10M9.5 0V15" stroke="#000"/><path d="M3 7.5H9M4.5 5V10M3.5 6V9" stroke="#000080"/><path d="M2 7.5H3" stroke="#000080"/><path d="M12.5 2.5H16.5V5.5H19.5V9.5H16.5V12.5H12.5V9.5H9.5V5.5H12.5Z" fill="#00ffff" stroke="#000"/></g></svg>
<svg style="left:210px;top:522px" width="24" height="19"><g transform="translate(2,2)" shape-rendering="crispEdges"><rect x="0" y="0" width="9" height="15" fill="#fff"/><path d="M0 0.5H10M0 4.5H10M0 10.5H10M0 14.5H10M9.5 0V5M9.5 10V15M3.5 4V11" stroke="#000"/><rect x="4" y="5" width="8" height="5" fill="#f00000"/><path d="M13 7.5H19M16.5 5V10M17.5 6V9" stroke="#000080"/><path d="M18 7.5H20" stroke="#000080"/></g></svg>
<div style="left:18px;top:545px;width:790px;height:77px;background:#fff;border-top:1px solid #6a6a6a;border-left:1px solid #6a6a6a;border-right:1px solid #787878;border-bottom:1px solid #787878;box-sizing:border-box;box-shadow:inset 1px 1px 0 #a0a0a0, inset 2px 2px 0 #767676, inset -1px -1px 0 #e3e3e3"></div>
<div style="left:21px;top:548px;width:784px;height:17px;background:#f0f0f0"></div>
<div style="left:21px;top:548px;width:784px;height:1px;background:#fff"></div>
<div style="left:21px;top:565px;width:784px;height:1px;background:#a0a0a0"></div>
<div style="left:21px;top:566px;width:19px;height:53px;background:#f0f0f0"></div>
<div style="left:21px;top:548px;width:1px;height:71px;background:#fff"></div>
<div style="left:40px;top:548px;width:1px;height:17px;background:#a0a0a0"></div>
<div style="left:41px;top:549px;width:1px;height:16px;background:#fff"></div>
<div style="left:323px;top:548px;width:1px;height:17px;background:#a0a0a0"></div>
<div style="left:324px;top:549px;width:1px;height:16px;background:#fff"></div>
<div style="left:395px;top:548px;width:1px;height:17px;background:#a0a0a0"></div>
<div style="left:396px;top:549px;width:1px;height:16px;background:#fff"></div>
<div style="left:21px;top:566px;width:19px;height:1px;background:#fff"></div>
<div style="left:21px;top:583px;width:19px;height:1px;background:#a0a0a0"></div>
<div style="left:21px;top:584px;width:19px;height:1px;background:#fff"></div>
<div style="left:40px;top:583px;width:765px;height:1px;background:repeating-linear-gradient(90deg,#000 0 1px,transparent 1px 2px)"></div>
<div style="left:21px;top:601px;width:19px;height:1px;background:#a0a0a0"></div>
<div style="left:21px;top:602px;width:19px;height:1px;background:#fff"></div>
<div style="left:40px;top:601px;width:765px;height:1px;background:repeating-linear-gradient(90deg,#000 0 1px,transparent 1px 2px)"></div>
<div style="left:40px;top:566px;width:1px;height:53px;background:repeating-linear-gradient(180deg,#000 0 1px,transparent 1px 2px)"></div>
<div style="left:323px;top:566px;width:1px;height:53px;background:repeating-linear-gradient(180deg,#000 0 1px,transparent 1px 2px)"></div>
<div style="left:395px;top:566px;width:1px;height:53px;background:repeating-linear-gradient(180deg,#000 0 1px,transparent 1px 2px)"></div>
<div style="left:40px;top:548px;width:1px;height:17px;background:#000"></div>
<div class="t" style="left:-18.00px;width:400px;text-align:center;top:551px;font-size:12px;line-height:12px;letter-spacing:0.000px;color:#000;transform:scaleX(0.8660);transform-origin:center top;">Condição de Pagamento</div>
<div class="t" style="left:159.00px;width:400px;text-align:center;top:551px;font-size:12px;line-height:12px;letter-spacing:0.000px;color:#000;transform:scaleX(0.8660);transform-origin:center top;">Status</div>
<div class="t" style="left:20.00px;top:630px;font-size:12px;line-height:12px;letter-spacing:0.000px;color:#000;transform:scaleX(0.8817);transform-origin:left top;">Cód. Identif. PDV</div>
<div style="left:106px;top:626px;width:133px;height:18px;background:#fff;border-top:1px solid #a0a0a0;border-left:1px solid #a0a0a0;border-bottom:1px solid #fff;border-right:1px solid #fff;box-sizing:border-box;box-shadow:inset 1px 1px 0 #696969, inset -1px -1px 0 #e3e3e3"></div>
<div style="left:242px;top:623px;width:66px;height:25px;background:#f0f0f0;border-top:1px solid #fff;border-left:1px solid #fff;border-bottom:1px solid #000;border-right:1px solid #000;box-sizing:border-box;box-shadow:inset -1px -1px 0 #a0a0a0"></div>
<div class="t" style="left:75.00px;width:400px;text-align:center;top:631px;font-size:12px;line-height:12px;letter-spacing:0.000px;color:#000;transform:scaleX(0.8660);transform-origin:center top;">Gerar</div>
<div style="left:10px;top:653px;width:117px;height:21px;background:#f0f0f0;border-top:1px solid #fff;border-left:1px solid #fff;border-bottom:1px solid #000;border-right:1px solid #000;box-sizing:border-box;box-shadow:inset -1px -1px 0 #a0a0a0"></div>
<div class="t" style="left:-131.50px;width:400px;text-align:center;top:659px;font-size:12px;line-height:12px;letter-spacing:0.000px;color:#000;transform:scaleX(0.8660);transform-origin:center top;">Inativar Cliente</div>
<div style="left:127px;top:653px;width:101px;height:21px;background:#f0f0f0;border-top:1px solid #fff;border-left:1px solid #fff;border-bottom:1px solid #000;border-right:1px solid #000;box-sizing:border-box;box-shadow:inset -1px -1px 0 #a0a0a0"></div>
<div class="t" style="left:-22.50px;width:400px;text-align:center;top:659px;font-size:12px;line-height:12px;letter-spacing:0.000px;color:#000;transform:scaleX(0.8660);transform-origin:center top;">Atributo Fixo</div>
<div style="left:228px;top:653px;width:103px;height:21px;background:#f0f0f0;border-top:1px solid #fff;border-left:1px solid #fff;border-bottom:1px solid #000;border-right:1px solid #000;box-sizing:border-box;box-shadow:inset -1px -1px 0 #a0a0a0"></div>
<div class="t" style="left:79.50px;width:400px;text-align:center;top:659px;font-size:12px;line-height:12px;letter-spacing:0.000px;color:#000;transform:scaleX(0.8660);transform-origin:center top;">Relacionamentos</div>
<div style="left:331px;top:653px;width:103px;height:21px;background:#f0f0f0;border-top:1px solid #fff;border-left:1px solid #fff;border-bottom:1px solid #000;border-right:1px solid #000;box-sizing:border-box;box-shadow:inset -1px -1px 0 #a0a0a0"></div>
<div class="t" style="left:182.50px;width:400px;text-align:center;top:659px;font-size:12px;line-height:12px;letter-spacing:0.000px;color:#000;transform:scaleX(0.8660);transform-origin:center top;">Advertências</div>
<div style="left:434px;top:653px;width:98px;height:21px;background:#f0f0f0;border-top:1px solid #fff;border-left:1px solid #fff;border-bottom:1px solid #000;border-right:1px solid #000;box-sizing:border-box;box-shadow:inset -1px -1px 0 #a0a0a0"></div>
<div class="t" style="left:283.00px;width:400px;text-align:center;top:659px;font-size:12px;line-height:12px;letter-spacing:0.000px;color:#000;transform:scaleX(0.8660);transform-origin:center top;">Versões Antigas</div>
<div style="left:532px;top:653px;width:177px;height:21px;background:#f0f0f0;border-top:1px solid #fff;border-left:1px solid #fff;border-bottom:1px solid #000;border-right:1px solid #000;box-sizing:border-box;box-shadow:inset -1px -1px 0 #a0a0a0"></div>
<div class="t" style="left:420.50px;width:400px;text-align:center;top:659px;font-size:12px;line-height:12px;letter-spacing:0.000px;color:#000;transform:scaleX(0.8660);transform-origin:center top;">Informações Complementares</div>
<div style="left:10px;top:675px;width:117px;height:21px;background:#f0f0f0;border-top:1px solid #fff;border-left:1px solid #fff;border-bottom:1px solid #000;border-right:1px solid #000;box-sizing:border-box;box-shadow:inset -1px -1px 0 #a0a0a0"></div>
<div class="t" style="left:-131.50px;width:400px;text-align:center;top:680px;font-size:12px;line-height:12px;letter-spacing:0.000px;color:#000;transform:scaleX(0.8660);transform-origin:center top;">Similaridades</div>
<div style="left:127px;top:675px;width:101px;height:21px;background:#f0f0f0;border-top:1px solid #fff;border-left:1px solid #fff;border-bottom:1px solid #000;border-right:1px solid #000;box-sizing:border-box;box-shadow:inset -1px -1px 0 #a0a0a0"></div>
<div class="t" style="left:-22.50px;width:400px;text-align:center;top:680px;font-size:12px;line-height:12px;letter-spacing:0.000px;color:#000;transform:scaleX(0.8660);transform-origin:center top;">Log de Alteração</div>
<div style="left:228px;top:675px;width:103px;height:21px;background:#f0f0f0;border-top:1px solid #fff;border-left:1px solid #fff;border-bottom:1px solid #000;border-right:1px solid #000;box-sizing:border-box;box-shadow:inset -1px -1px 0 #a0a0a0"></div>
<div class="t" style="left:79.50px;width:400px;text-align:center;top:680px;font-size:12px;line-height:12px;letter-spacing:0.000px;color:#000;transform:scaleX(0.8660);transform-origin:center top;">Prescritor</div>
<div style="left:331px;top:675px;width:103px;height:21px;background:#f0f0f0;border-top:1px solid #fff;border-left:1px solid #fff;border-bottom:1px solid #000;border-right:1px solid #000;box-sizing:border-box;box-shadow:inset -1px -1px 0 #a0a0a0"></div>
<div class="t" style="left:182.50px;width:400px;text-align:center;top:680px;font-size:12px;line-height:12px;letter-spacing:0.000px;color:#000;transform:scaleX(0.8660);transform-origin:center top;">Embarcações</div>
<div style="left:573px;top:297px;width:64px;height:31px;border:4px solid #f7ec00;border-radius:8px;box-sizing:border-box"></div>
</body></html>
